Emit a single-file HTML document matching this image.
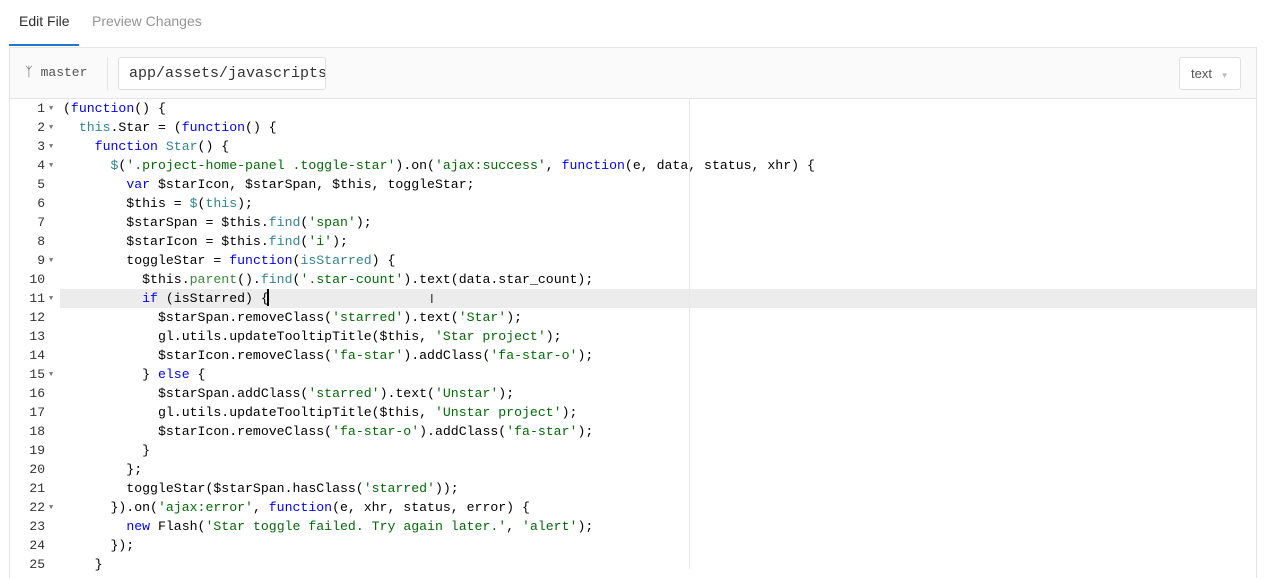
<!DOCTYPE html>
<html><head><style>
body{margin:0;width:1264px;height:566px;overflow:hidden;background:#fff;font-family:"Liberation Sans",sans-serif;}
.tabs{position:absolute;left:9px;top:0;height:47px;width:1247px;}
.tab{position:absolute;top:13px;font-size:14px;}
.card{position:absolute;left:9px;top:47px;width:1246px;height:530px;border:1px solid #e5e5e5;border-bottom:none;}
.hdr{height:50px;border-bottom:1px solid #e5e5e5;background:#fafafa;position:relative;}
.code{position:absolute;left:0;top:51px;width:1246px;font-family:"Liberation Mono",monospace;font-size:13.2px;}
.ln{position:absolute;left:0;width:35px;text-align:right;color:#333;font-size:13px;}
.ar{position:absolute;left:39px;font-size:7px;color:#777;}
.line{position:absolute;left:53px;white-space:pre;height:19px;line-height:19px;color:#000;}
.k{color:#0000ff}.t{color:#318495}.s{color:#036a07}.m{color:#3a8a3a}
</style></head><body>
<div class="tabs">
<div class="tab" style="left:10px;color:#2e2e2e">Edit File</div>
<div class="tab" style="left:83px;color:#959494">Preview Changes</div>
<div style="position:absolute;left:0;top:44px;width:70px;height:2px;background:#1f78d1"></div>
</div>
<div class="card">
<div class="hdr">
<div style="position:absolute;left:15px;top:17px;font-family:'Liberation Mono',monospace;font-size:13px;color:#555">&#5833; master</div>
<div style="position:absolute;left:97px;top:9px;width:1px;height:33px;background:#e5e5e5"></div>
<div style="position:absolute;left:108px;top:9px;width:208px;height:33px;border:1px solid #e0e0e0;border-radius:3px;background:#fff;overflow:hidden;font-family:'Liberation Mono',monospace;font-size:15px;color:#333;line-height:31px;padding-left:10px;box-sizing:border-box;white-space:nowrap">app/assets/javascripts</div>
<div style="position:absolute;left:1169px;top:9px;width:62px;height:33px;border:1px solid #e0e0e0;border-radius:3px;background:#fff;box-sizing:border-box;font-size:13px;color:#555;line-height:31px;padding-left:11px">text <span style="color:#bbb;font-size:8px;margin-left:5px">&#9660;</span></div>
</div>
</div>
<div style="position:absolute;left:60px;top:289px;width:1196px;height:19px;background:#ececec"></div>
<div style="position:absolute;left:689px;top:99px;width:1px;height:470px;background:#e8e8e8"></div>
<div style="position:absolute;left:267px;top:289px;width:2px;height:17px;background:#000"></div>
<div style="position:absolute;left:430px;top:291px;font-size:13px;color:#333">I</div>
<div class="code" style="left:10px;top:99px">
<div id="c"></div>
</div>
<script>
var L=[
[1,1,'(<span class=k>function</span>() {'],
[2,1,'  <span class=t>this</span>.Star = (<span class=k>function</span>() {'],
[3,1,'    <span class=k>function</span> <span class=t>Star</span>() {'],
[4,1,'      <span class=t>$</span>(<span class=s>\'.project-home-panel .toggle-star\'</span>).on(<span class=s>\'ajax:success\'</span>, <span class=k>function</span>(e, data, status, xhr) {'],
[5,0,'        <span class=k>var</span> $starIcon, $starSpan, $this, toggleStar;'],
[6,0,'        $this = <span class=t>$</span>(<span class=t>this</span>);'],
[7,0,'        $starSpan = $this.<span class=t>find</span>(<span class=s>\'span\'</span>);'],
[8,0,'        $starIcon = $this.<span class=t>find</span>(<span class=s>\'i\'</span>);'],
[9,1,'        toggleStar = <span class=k>function</span>(<span class=t>isStarred</span>) {'],
[10,0,'          $this.<span class=m>parent</span>().<span class=t>find</span>(<span class=s>\'.star-count\'</span>).text(data.star_count);'],
[11,1,'          <span class=k>if</span> (isStarred) {'],
[12,0,'            $starSpan.removeClass(<span class=s>\'starred\'</span>).text(<span class=s>\'Star\'</span>);'],
[13,0,'            gl.utils.updateTooltipTitle($this, <span class=s>\'Star project\'</span>);'],
[14,0,'            $starIcon.removeClass(<span class=s>\'fa-star\'</span>).addClass(<span class=s>\'fa-star-o\'</span>);'],
[15,1,'          } <span class=k>else</span> {'],
[16,0,'            $starSpan.addClass(<span class=s>\'starred\'</span>).text(<span class=s>\'Unstar\'</span>);'],
[17,0,'            gl.utils.updateTooltipTitle($this, <span class=s>\'Unstar project\'</span>);'],
[18,0,'            $starIcon.removeClass(<span class=s>\'fa-star-o\'</span>).addClass(<span class=s>\'fa-star\'</span>);'],
[19,0,'          }'],
[20,0,'        };'],
[21,0,'        toggleStar($starSpan.hasClass(<span class=s>\'starred\'</span>));'],
[22,1,'      }).on(<span class=s>\'ajax:error\'</span>, <span class=k>function</span>(e, xhr, status, error) {'],
[23,0,'        <span class=k>new</span> Flash(<span class=s>\'Star toggle failed. Try again later.\'</span>, <span class=s>\'alert\'</span>);'],
[24,0,'      });'],
[25,0,'    }']];
var h='';L.forEach(function(l,i){var y=i*19;
h+='<div class=ln style="top:'+y+'px;line-height:19px">'+l[0]+'</div>';
if(l[1])h+='<div class=ar style="top:'+(y+6)+'px">&#9660;</div>';
h+='<div class=line style="top:'+y+'px">'+l[2]+'</div>';});
document.getElementById('c').innerHTML=h;
</script>
</body></html>
